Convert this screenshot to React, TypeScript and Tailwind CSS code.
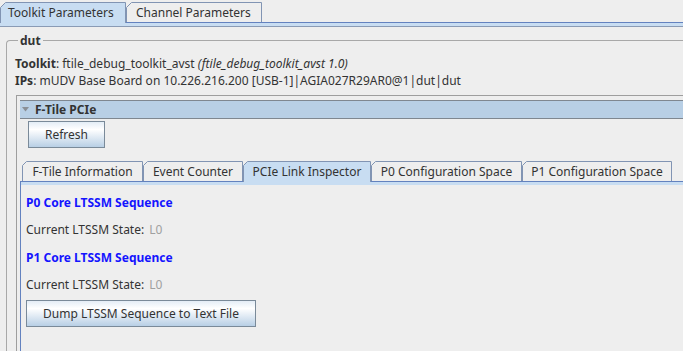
import React from "react";

type TabProps = {
  w: number;
  h: number;
  selected?: boolean;
  className: string;
  children: React.ReactNode;
  slant?: number;
};

function Tab({ w, h, selected, className, children, slant = 5 }: TabProps) {
  const d = `M0.5 ${h} V${slant + 0.5} L${slant + 0.5} 0.5 H${w - 0.5} V${h}`;
  return (
    <div
      className={`relative shrink-0 flex items-center ${className} ${
        selected ? "" : "border-b border-[#6382bf]"
      }`}
    >
      <svg
        className="absolute left-0 top-0"
        width={w}
        height={h}
        viewBox={`0 0 ${w} ${h}`}
      >
        <path d={d} fill={selected ? "#c8ddf2" : "none"} stroke="#8194b3" strokeWidth={1} />
      </svg>
      <span className="relative whitespace-nowrap">{children}</span>
    </div>
  );
}

function OceanButton({ className, children }: { className: string; children: React.ReactNode }) {
  return (
    <div
      className={`flex items-center justify-center border border-[#7a8a99] bg-[linear-gradient(to_bottom,#e4edf6_0%,#ffffff_30%,#b8cfe5_100%)] text-[#333333] ${className}`}
    >
      {children}
    </div>
  );
}

export default function App() {
  return (
    <div className="w-[683px] h-[351px] overflow-hidden bg-[#eeeeee] text-[#333333] text-[12px] leading-[17px] font-['Noto_Sans',sans-serif]">
      {/* Top tab strip */}
      <div className="flex items-end pt-[2px] h-[23px]">
        <Tab w={126} h={21} selected className="w-[126px] h-[21px] pl-[8px]">
          Toolkit Parameters
        </Tab>
        <Tab w={136} h={20} className="w-[136px] h-[21px] pl-[10px]">
          Channel Parameters
        </Tab>
        <div className="flex-1 h-[21px] border-b border-[#6382bf]" />
      </div>
      <div className="h-[3px] bg-[#c8ddf2]" />
      <div className="h-px bg-[#8a9bb5]" />

      {/* dut titled border */}
      <fieldset className="ml-[6px] mt-[5px] border-l border-t border-[#a8a8a8] rounded-tl-[4px] pl-[8px]">
        <legend className="ml-[3px] px-[2px] font-bold leading-[17px]">dut</legend>
        <div className="mt-[6px] whitespace-nowrap">
          <span className="font-bold">Toolkit</span>: ftile_debug_toolkit_avst{" "}
          <span className="italic">(ftile_debug_toolkit_avst 1.0)</span>
        </div>
        <div className="whitespace-nowrap">
          <span className="font-bold">IPs</span>: mUDV Base Board on 10.226.216.200 [USB-1]|AGIA027R29AR0@1|dut|dut
        </div>

        {/* F-Tile PCIe panel */}
        <div className="ml-[1px] mt-[6px] border-l border-t border-[#9e9e9e] pl-[3px] pt-[4px]">
          <div className="h-[19px] border-y border-[#7f8790] bg-[#b8cfe5] flex items-center pl-[2px]">
            <svg width="7" height="5" viewBox="0 0 7 5" className="mr-[6px]">
              <path d="M0 0 H7 L3.5 4.5 Z" fill="#8a8f96" />
            </svg>
            <span className="font-bold">F-Tile PCIe</span>
          </div>
          <OceanButton className="ml-[8px] mt-[2px] w-[77px] h-[27px]">Refresh</OceanButton>

          {/* inner tabs */}
          <div className="mt-[13px] flex items-end h-[21px]">
            <div className="w-[2px] h-[21px] border-b border-[#6382bf]" />
            <Tab w={121} h={20} slant={4} className="w-[121px] h-[21px] justify-center">
              F-Tile Information
            </Tab>
            <Tab w={100} h={20} slant={4} className="w-[100px] h-[21px] justify-center">
              Event Counter
            </Tab>
            <Tab w={128} h={21} slant={4} selected className="w-[128px] h-[21px] justify-center">
              PCIe Link Inspector
            </Tab>
            <Tab w={151} h={20} slant={4} className="w-[151px] h-[21px] justify-center">
              P0 Configuration Space
            </Tab>
            <Tab w={150} h={20} slant={4} className="w-[150px] h-[21px] justify-center">
              P1 Configuration Space
            </Tab>
            <div className="flex-1 h-[21px] border-b border-[#6382bf]" />
          </div>
          <div className="border-l border-[#6382bf]">
            <div className="h-[3px] bg-[#c8ddf2]" />
            <div className="pl-[5px] pt-[9px] pb-[60px] flex flex-col items-start">
              <div className="font-bold text-[#1414ff]">P0 Core LTSSM Sequence</div>
              <div className="mt-[10px] flex gap-[5px]">
                <span>Current LTSSM State:</span>
                <span className="text-[#a0a0a0]">L0</span>
              </div>
              <div className="mt-[11px] font-bold text-[#1414ff]">P1 Core LTSSM Sequence</div>
              <div className="mt-[10px] flex gap-[5px]">
                <span>Current LTSSM State:</span>
                <span className="text-[#a0a0a0]">L0</span>
              </div>
              <OceanButton className="mt-[7px] w-[230px] h-[27px]">
                Dump LTSSM Sequence to Text File
              </OceanButton>
            </div>
          </div>
        </div>
      </fieldset>
    </div>
  );
}
